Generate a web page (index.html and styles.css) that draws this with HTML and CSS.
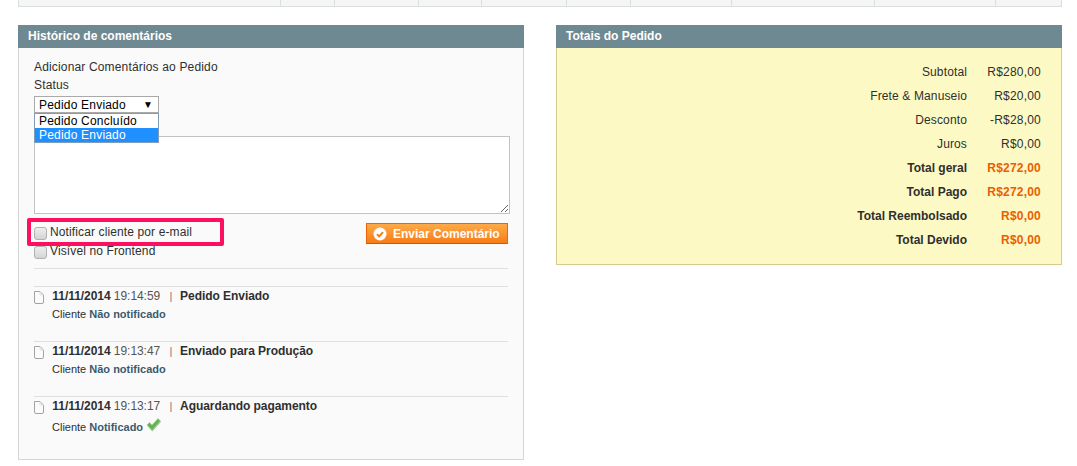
FILE: index.html
```html
<!DOCTYPE html>
<html lang="pt-BR">
<head>
  <meta charset="UTF-8" />
  <title>Pedido - Comentários e Totais</title>
  <link rel="stylesheet" href="styles.css">
</head>
<body>
<div class="table-strip">
  <span></span><span></span><span></span><span></span><span></span>
  <span></span><span></span><span></span><span></span><span></span>
</div>
<main class="columns">
  <section class="box comments">
    <h4 class="box-title">Histórico de comentários</h4>
    <div class="box-body comments-body">
      <p class="line">Adicionar Comentários ao Pedido</p>
      <label class="line status-label">Status</label>
      <div class="select-wrap">
        <div class="select-box">
          <span>Pedido Enviado</span>
          <span class="select-arrow">▼</span>
        </div>
        <ul class="select-menu">
          <li>Pedido Concluído</li>
          <li class="selected">Pedido Enviado</li>
        </ul>
      </div>
      <textarea class="comment-text"></textarea>
      <div class="form-row">
        <div class="checks">
          <label class="check"><input type="checkbox" /> Notificar cliente por e-mail</label>
          <label class="check"><input type="checkbox" /> Visível no Frontend</label>
          <div class="highlight"></div>
        </div>
        <button class="send-btn" type="button">
          <svg class="send-icon" width="14" height="14" viewBox="0 0 14 14">
            <circle cx="7" cy="7" r="6.5" fill="#fff" />
            <path d="M4 7.2l2.2 2.2L10 5.2" fill="none" stroke="#f77c16" stroke-width="2" />
          </svg>
          Enviar Comentário
        </button>
      </div>
      <ul class="history">
        <li class="history-item">
          <div class="history-head">
            <svg class="doc-icon" width="11" height="13" viewBox="0 0 11 13"><path d="M1.500.5h5.500l3.500 3.500v7a1.500 1.500 0 0 1-1.500 1.500h-6a1.500 1.500 0 0 1-1.500-1.500z" fill="#fbfbfb" stroke="#a3a3a3" /><path d="M7 .5v3.500h3.500" fill="none" stroke="#ddd" /></svg>
            <strong>11/11/2014</strong> <span class="time">19:14:59</span> <span class="sep">|</span> <strong>Pedido Enviado</strong>
          </div>
          <small class="notify">Cliente <b>Não notificado</b></small>
        </li>
        <li class="history-item">
          <div class="history-head">
            <svg class="doc-icon" width="11" height="13" viewBox="0 0 11 13"><path d="M1.500.5h5.500l3.500 3.500v7a1.500 1.500 0 0 1-1.500 1.500h-6a1.500 1.500 0 0 1-1.500-1.500z" fill="#fbfbfb" stroke="#a3a3a3" /><path d="M7 .5v3.500h3.500" fill="none" stroke="#ddd" /></svg>
            <strong>11/11/2014</strong> <span class="time">19:13:47</span> <span class="sep">|</span> <strong>Enviado para Produção</strong>
          </div>
          <small class="notify">Cliente <b>Não notificado</b></small>
        </li>
        <li class="history-item">
          <div class="history-head">
            <svg class="doc-icon" width="11" height="13" viewBox="0 0 11 13"><path d="M1.500.5h5.500l3.500 3.500v7a1.500 1.500 0 0 1-1.500 1.500h-6a1.500 1.500 0 0 1-1.500-1.500z" fill="#fbfbfb" stroke="#a3a3a3" /><path d="M7 .5v3.500h3.500" fill="none" stroke="#ddd" /></svg>
            <strong>11/11/2014</strong> <span class="time">19:13:17</span> <span class="sep">|</span> <strong>Aguardando pagamento</strong>
          </div>
          <small class="notify">Cliente <b>Notificado</b>
            <svg class="ok-icon" width="16" height="14" viewBox="0 0 16 14"><path d="M1.500 8l2.500-2.500L6.500 8l6-6.500L15 4l-8.500 9.500z" fill="#b9c4b6" /><path d="M1 7l2.500-2.500L6 7l6-6.500L14.500 3 6 12.500z" fill="#63b44c" stroke="#a9d79b" stroke-width=".7" /></svg>
          </small>
        </li>
      </ul>
    </div>
  </section>
  <section class="box totals">
    <h4 class="box-title">Totais do Pedido</h4>
    <div class="box-body totals-body">
      <div class="total-row"><span>Subtotal</span><span class="amount">R$280,00</span></div>
      <div class="total-row"><span>Frete &amp; Manuseio</span><span class="amount">R$20,00</span></div>
      <div class="total-row"><span>Desconto</span><span class="amount">-R$28,00</span></div>
      <div class="total-row"><span>Juros</span><span class="amount">R$0,00</span></div>
      <div class="total-row strong"><span>Total geral</span><span class="amount">R$272,00</span></div>
      <div class="total-row strong"><span>Total Pago</span><span class="amount">R$272,00</span></div>
      <div class="total-row strong"><span>Total Reembolsado</span><span class="amount">R$0,00</span></div>
      <div class="total-row strong"><span>Total Devido</span><span class="amount">R$0,00</span></div>
    </div>
  </section>
</main>
</body>
</html>
```

FILE: styles.css
```css
body {
  margin: 0;
  padding: 0 15px 0 18px;
  background: #fff;
  color: #2f2f2f;
  font: 12px/15px "Liberation Sans", Arial, sans-serif;
  height: 466px;
  overflow: hidden;
  box-sizing: border-box;
}
.table-strip {
  display: grid;
  grid-template-columns: 262px 54px 84px 63px 85px 64px 101px 143px 121px 67px;
  height: 7px;
  box-sizing: border-box;
  background: #f5f5f5;
  border: 1px solid #dadfe0;
  border-top: 0;
}
.table-strip span {
  border-right: 1px solid #dadfe0;
}
.table-strip span:last-child {
  border-right: 0;
}
.columns {
  display: flex;
  justify-content: space-between;
  align-items: flex-start;
  margin-top: 18px;
}
.box {
  width: 506px;
}
.box-title {
  margin: 0;
  height: 23px;
  padding: 0 10px;
  background: #6f8992;
  color: #fff;
  font-size: 12px;
  font-weight: 700;
  line-height: 22px;
}
.box-body {
  box-sizing: border-box;
  border: 1px solid #d6d6d6;
  border-top: 0;
}
.comments-body {
  background: #fafafa;
  height: 412px;
  padding: 12px 15px 0;
}
.line {
  margin: 0;
  display: block;
  letter-spacing: .16px;
}
.status-label {
  margin-top: 3px;
}
.select-wrap {
  position: relative;
  margin-top: 3px;
  width: 125px;
  letter-spacing: .2px;
}
.select-box {
  box-sizing: border-box;
  height: 17px;
  display: flex;
  justify-content: space-between;
  border: 1px solid #aaa;
  background: #fff;
  color: #000;
  padding: 0 5px 0 4px;
  line-height: 16px;
}
.select-arrow {
  font-size: 10px;
}
.select-menu {
  position: absolute;
  top: 17px;
  left: 0;
  right: 0;
  margin: 0;
  padding: 0;
  list-style: none;
  background: #fff;
  color: #000;
  border: 1px solid #7f9db9;
  z-index: 5;
}
.select-menu li {
  height: 14px;
  line-height: 15px;
  padding-left: 4px;
}
.select-menu .selected {
  background: #1e90ff;
  color: #fff;
}
.comment-text {
  display: block;
  box-sizing: border-box;
  width: 476px;
  height: 78px;
  margin: 23px 0 0;
  border: 1px solid #c2c2c2;
  background: #fff;
  padding: 0;
}
.form-row {
  display: flex;
  justify-content: space-between;
  align-items: flex-start;
  width: 474px;
  margin-top: 9px;
}
.checks {
  position: relative;
}
.check {
  display: flex;
  align-items: center;
  gap: 3px;
  height: 19px;
  letter-spacing: .12px;
}
.check input {
  appearance: none;
  box-sizing: border-box;
  width: 13px;
  height: 13px;
  margin: 1px 0 0;
  border: 1px solid #b0b0b0;
  border-radius: 3px;
  background: linear-gradient(#eee, #d4d4d4);
}
.highlight {
  position: absolute;
  top: -5px;
  left: -7px;
  width: 197px;
  height: 28px;
  box-sizing: border-box;
  border: 4px solid #ff0f5f;
  border-radius: 2px;
}
.send-btn {
  display: flex;
  align-items: center;
  gap: 6px;
  box-sizing: border-box;
  width: 142px;
  height: 21px;
  padding: 0 0 0 6px;
  margin-top: 0;
  border: 1px solid #ed6502;
  border-bottom-color: #c85a0a;
  background: linear-gradient(#fdaa49, #f77c16);
  color: #fff;
  font: 700 12px "Liberation Sans", Arial, sans-serif;
  white-space: nowrap;
}
.send-icon {
  flex: none;
}
.history {
  list-style: none;
  margin: 7px 0 0;
  padding: 0;
  width: 474px;
  border-top: 1px solid #e0e0e0;
  padding-top: 17px;
}
.history-item {
  height: 55px;
  box-sizing: border-box;
  border-top: 1px solid #e0e0e0;
}
.history-head {
  white-space: nowrap;
  height: 18px;
  line-height: 18px;
  letter-spacing: -.05px;
}
.doc-icon {
  margin-right: 5px;
  margin-left: -1px;
  vertical-align: -4px;
}
.time {
  color: #555;
}
.sep {
  margin: 0 4.5px 0 6px;
  color: #777;
  font-size: 11px;
}
.notify {
  display: block;
  font-size: 11px;
  margin-left: 18px;
  margin-top: 2px;
}
.notify b {
  color: #3a5a6e;
}
.ok-icon {
  vertical-align: -1px;
  margin-top: 1px;
}
.totals-body {
  background: #fdf9c4;
  border-color: #d6ca8e;
  height: 217px;
  padding: 12px 20px 0 0;
}
.total-row {
  display: flex;
  justify-content: flex-end;
  height: 24px;
  line-height: 24px;
  letter-spacing: .13px;
}
.amount {
  width: 74px;
  text-align: right;
  letter-spacing: .2px;
}
.strong {
  font-weight: 700;
  letter-spacing: 0;
}
.strong .amount {
  color: #eb5e00;
}
```
